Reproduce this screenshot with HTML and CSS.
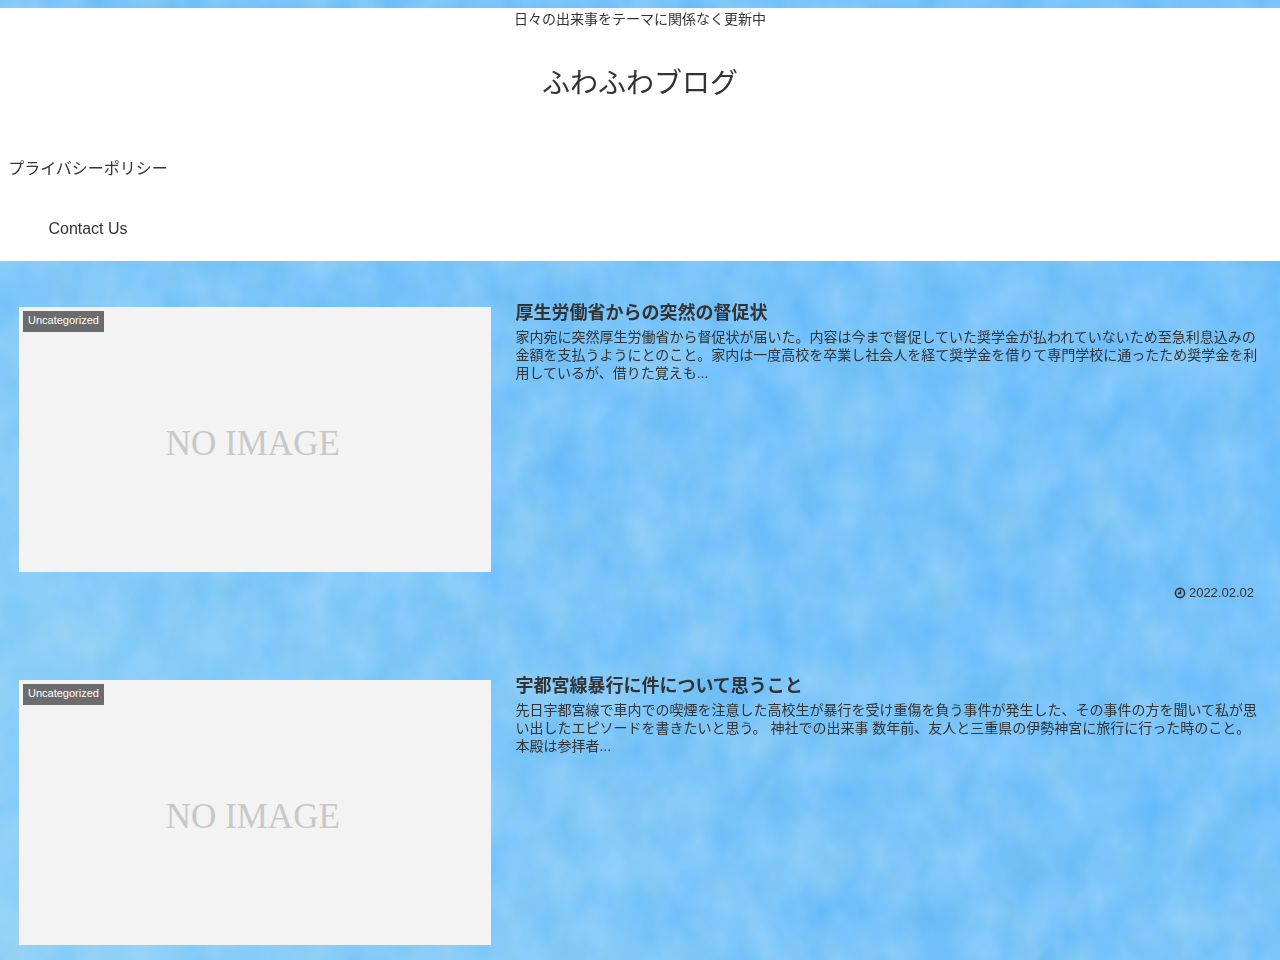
FILE: index.html
```
<!DOCTYPE html>
<html lang="ja">

<head>
    <meta charset="UTF-8">
    <meta name="viewport" content="width=device-width, initial-scale=1.0">
    <title>ふわふわブログ</title>
    <link rel="stylesheet" href="styles.css">
</head>

<body>
    <!-- Water texture behind the page -->
    <svg class="water" aria-hidden="true">
        <filter id="ripple" x="0" y="0" width="100%" height="100%" color-interpolation-filters="sRGB">
            <feTurbulence type="fractalNoise" baseFrequency="0.024 0.018" numOctaves="3" seed="8"/>
            <feColorMatrix values="0.26 0 0 0 0.35  0.12 0 0 0 0.71  0 0.08 0 0 0.94  0 0 0 0 1"/>
        </filter>
        <rect width="100%" height="100%" filter="url(#ripple)"/>
    </svg>
    <div class="tint"></div>

    <!-- Header -->
    <header class="header">
        <div class="tagline">日々の出来事をテーマに関係なく更新中</div>
        <h1 class="site-name"><a href="#">ふわふわブログ</a></h1>
        <nav class="navi">
            <ul>
                <li><a href="#">プライバシーポリシー</a></li>
                <li><a href="#">Contact Us</a></li>
            </ul>
        </nav>
    </header>

    <!-- Entry list -->
    <main class="list">
        <a class="entry-card" href="#">
            <div class="thumb">
                <span class="no-image">NO IMAGE</span>
                <span class="cat-label">Uncategorized</span>
            </div>
            <div class="entry-content">
                <h2>厚生労働省からの突然の督促状</h2>
                <p>家内宛に突然厚生労働省から督促状が届いた。内容は今まで督促していた奨学金が払われていないため至急利息込みの金額を支払うようにとのこと。家内は一度高校を卒業し社会人を経て奨学金を借りて専門学校に通ったため奨学金を利用しているが、借りた覚えも...</p>
                <div class="post-date">
                    <svg viewBox="0 0 12 12" aria-hidden="true"><circle cx="6" cy="6" r="4.6"/><path d="M6.4 3.2v3.2H3.8"/></svg>
                    <span>2022.02.02</span>
                </div>
            </div>
        </a>
        <a class="entry-card" href="#">
            <div class="thumb">
                <span class="no-image">NO IMAGE</span>
                <span class="cat-label">Uncategorized</span>
            </div>
            <div class="entry-content">
                <h2>宇都宮線暴行に件について思うこと</h2>
                <p>先日宇都宮線で車内での喫煙を注意した高校生が暴行を受け重傷を負う事件が発生した、その事件の方を聞いて私が思い出したエピソードを書きたいと思う。 神社での出来事 数年前、友人と三重県の伊勢神宮に旅行に行った時のこと。本殿は参拝者...</p>
                <div class="post-date">
                    <svg viewBox="0 0 12 12" aria-hidden="true"><circle cx="6" cy="6" r="4.6"/><path d="M6.4 3.2v3.2H3.8"/></svg>
                    <span>2022.02.02</span>
                </div>
            </div>
        </a>
    </main>
</body>

</html>
```
FILE: styles.css
```
* {
    box-sizing: border-box;
}

body {
    margin: 0;
    padding-top: 8px;
    background-color: #7cc5fa;
    color: #333;
    font-family: "Liberation Sans", "Noto Sans CJK JP", sans-serif;
    font-size: 14px;
    line-height: 18px;
}

a {
    color: inherit;
    text-decoration: none;
}

/* Background */
.water,
.tint {
    position: fixed;
    top: 0;
    left: 0;
    width: 100%;
    height: 100%;
    z-index: -1;
}

.tint {
    background: linear-gradient(50deg, rgba(160, 218, 245, 0.6), rgba(130, 200, 245, 0.2) 45%, rgba(108, 190, 255, 0.3));
}

/* Header */
.header {
    background-color: #fff;
    padding: 2px 0;
}

.tagline {
    text-align: center;
}

.site-name {
    margin: 37px 0 36px;
    font-size: 28px;
    font-weight: normal;
    line-height: 38px;
    text-align: center;
}

.navi ul {
    display: flex;
    flex-direction: column;
    margin: 0;
    padding: 0;
    list-style: none;
}

.navi li {
    width: 176px;
    font-size: 16px;
    line-height: 60px;
    text-align: center;
}

.navi a {
    display: block;
}

/* Entry cards */
.list {
    padding: 40px 20px 40px 19px;
}

.entry-card {
    display: flex;
    justify-content: space-between;
    margin-bottom: 72px;
}

.thumb {
    position: relative;
    display: flex;
    align-items: center;
    justify-content: center;
    align-self: flex-start;
    width: 38%;
    aspect-ratio: 16 / 9;
    margin-top: 6px;
    background-color: #f3f3f3;
}

.no-image {
    padding: 8px 4px 0 0;
    color: #c8c8c8;
    font-family: "Liberation Serif", serif;
    font-size: 35px;
    line-height: 40px;
}

.cat-label {
    position: absolute;
    top: 4px;
    left: 4px;
    padding: 0 5px 3px;
    background-color: #6c6c6c;
    color: #fff;
    font-size: 11px;
}

.entry-content {
    display: flex;
    flex-direction: column;
    width: 60%;
    min-height: 301px;
}

.entry-content h2 {
    margin: 0 0 3px;
    font-size: 18px;
    line-height: 24px;
}

.entry-content p {
    margin: 0;
}

.post-date {
    display: flex;
    align-items: center;
    justify-content: flex-end;
    gap: 3px;
    margin-top: auto;
    padding-right: 6px;
    font-size: 13px;
}

.post-date svg {
    width: 12px;
    height: 12px;
    fill: none;
    stroke: #333;
    stroke-width: 1.6;
}
```
